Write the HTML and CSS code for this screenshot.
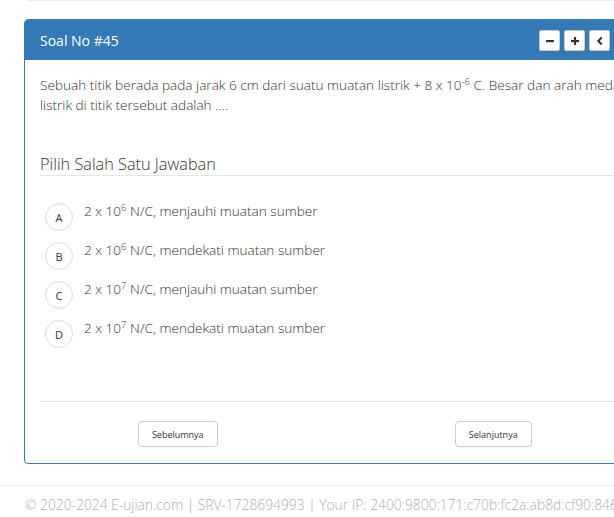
FILE: index.html
```html
<!DOCTYPE html>
<html lang="id">
<head>
<meta charset="utf-8">
<title>Soal No #45</title>
<link rel="stylesheet" href="styles.css">
</head>
<body>
<div class="topline"></div>
<main class="wrap">
  <section class="panel">
    <header class="panel-head">
      <h3 class="panel-title">Soal No #45</h3>
      <div class="tools">
        <button class="tool" aria-label="Perkecil"><svg viewBox="0 0 10 10" width="10" height="10"><rect x="1" y="4" width="8" height="2.2" fill="#333"/></svg></button>
        <button class="tool" aria-label="Perbesar"><svg viewBox="0 0 10 10" width="10" height="10"><rect x="1" y="4" width="8" height="2.2" fill="#333"/><rect x="3.9" y="1" width="2.2" height="8" fill="#333"/></svg></button>
        <button class="tool" aria-label="Sebelumnya"><svg viewBox="0 0 10 10" width="10" height="10"><path d="M6.8 1.5 L3.2 5 L6.8 8.5" fill="none" stroke="#333" stroke-width="2"/></svg></button>
        <button class="tool" aria-label="Berikutnya"><svg viewBox="0 0 10 10" width="10" height="10"><path d="M3.2 1.5 L6.8 5 L3.2 8.5" fill="none" stroke="#333" stroke-width="2"/></svg></button>
      </div>
    </header>
    <div class="panel-body">
      <p class="question">Sebuah titik berada pada jarak 6 cm dari suatu muatan listrik + 8 x 10<sup>-6</sup> C. Besar dan arah medan listrik di titik tersebut adalah ....</p>
      <h4 class="choose">Pilih Salah Satu Jawaban</h4>
      <ul class="options">
        <li class="option"><span class="letter">A</span><span class="text">2 x 10<sup>6</sup> N/C, menjauhi muatan sumber</span></li>
        <li class="option"><span class="letter">B</span><span class="text">2 x 10<sup>6</sup> N/C, mendekati muatan sumber</span></li>
        <li class="option"><span class="letter">C</span><span class="text">2 x 10<sup>7</sup> N/C, menjauhi muatan sumber</span></li>
        <li class="option"><span class="letter">D</span><span class="text">2 x 10<sup>7</sup> N/C, mendekati muatan sumber</span></li>
      </ul>
      <div class="nav">
        <div class="nav-col"><button class="btn">Sebelumnya</button></div>
        <div class="nav-col"><button class="btn">Selanjutnya</button></div>
      </div>
    </div>
  </section>
</main>
<footer class="footer">© 2020-2024 E-ujian.com | SRV-1728694993 | Your IP: 2400:9800:171:c70b:fc2a:ab8d:cf90:8466</footer>
</body>
</html>
```

FILE: styles.css
```css
html, body {
  margin: 0;
  padding: 0;
}
body {
  font-family: "Open Sans", "Noto Sans", sans-serif;
  color: #333;
  background: #fff;
  width: 760px;
  overflow: hidden;
}
.topline {
  margin-left: 27px;
  height: 1px;
  background: #eee;
}
.wrap {
  padding: 18px 0 0 24px;
}
.panel {
  width: 645px;
  border: 1px solid #337ab7;
  border-radius: 4px;
  box-sizing: border-box;
}
.panel-head {
  background: #337ab7;
  height: 40px;
  display: flex;
  align-items: center;
  padding: 0 15px;
  border-radius: 3px 3px 0 0;
}
.panel-title {
  margin: 0;
  color: #fff;
  font-size: 14px;
  font-weight: 400;
  flex: 1;
}
.tools {
  display: flex;
  gap: 4px;
  margin-right: 18px;
  margin-top: 1px;
}
.tool {
  width: 21px;
  height: 21px;
  padding: 0;
  border: 1px solid #ccc;
  border-radius: 2px;
  background: #fff;
  display: flex;
  align-items: center;
  justify-content: center;
}
.panel-body {
  padding: 15px 15px 16px;
}
.question {
  margin: 0;
  font-size: 13.6px;
  line-height: 20px;
  font-weight: 300;
}
sup {
  font-size: 9.5px;
  line-height: 0;
  vertical-align: 5px;
}
.choose {
  margin: 38px 0 0;
  font-size: 16.3px;
  font-weight: 300;
  line-height: 22px;
  padding-bottom: 0;
  border-bottom: 1px solid #e5e5e5;
}
.options {
  list-style: none;
  margin: 27px 0 0;
  padding: 0 0 0 5px;
  display: flex;
  flex-direction: column;
  gap: 11px;
}
.option {
  display: flex;
  align-items: flex-start;
  gap: 11px;
  height: 28px;
}
.letter {
  width: 26px;
  height: 26px;
  border: 1px solid #ddd;
  border-radius: 50%;
  display: flex;
  align-items: center;
  justify-content: center;
  font-size: 11px;
  font-weight: 400;
  flex: none;
}
.text {
  font-size: 13.6px;
  font-weight: 300;
  line-height: 20px;
  margin-top: -2px;
}
.nav {
  display: grid;
  grid-template-columns: 1fr 1fr;
  margin: 53px 0 0 -20px;
  width: 631px;
  padding-top: 20px;
  position: relative;
}
.nav::before {
  content: "";
  position: absolute;
  top: 0;
  left: 20px;
  width: 620px;
  height: 1px;
  background: #e5e5e5;
}
.nav-col {
  display: flex;
  justify-content: center;
}
.btn {
  font-family: "Open Sans", "Noto Sans", sans-serif;
  font-size: 9px;
  color: #333;
  background: #fff;
  border: 1px solid #ccc;
  border-radius: 4px;
  height: 26px;
  padding: 0 13px;
}
.footer {
  margin-top: 21px;
  border-top: 1px solid #eee;
  padding: 9px 0 0 25px;
  font-size: 13.8px;
  font-weight: 300;
  color: #b0b0b0;
  white-space: nowrap;
}
```
